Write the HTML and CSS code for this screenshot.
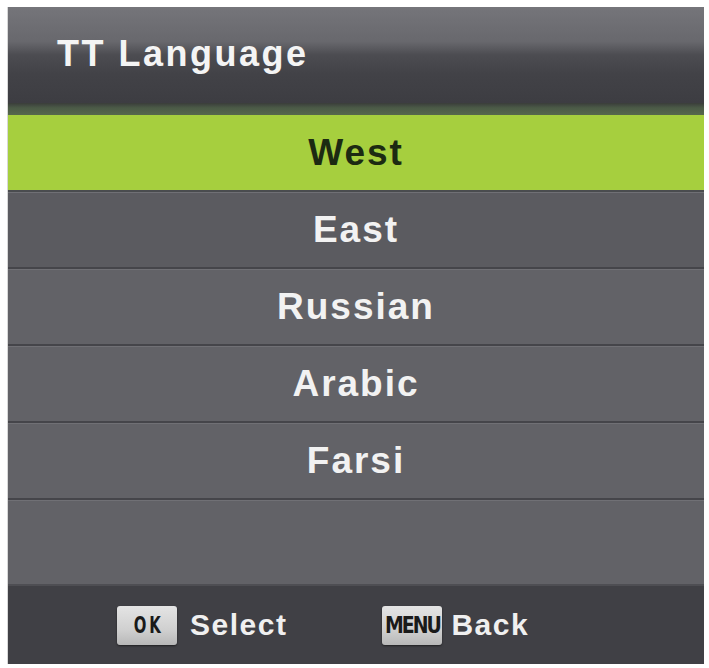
FILE: index.html
```html
<!DOCTYPE html>
<html>
<head>
<meta charset="utf-8">
<link rel="stylesheet" href="styles.css">
</head>
<body>
<div class="panel">
  <div class="header"><span class="title">TT Language</span></div>
  <div class="strip"></div>
  <div class="list">
    <div class="row selected">West</div>
    <div class="row">East</div>
    <div class="row">Russian</div>
    <div class="row">Arabic</div>
    <div class="row">Farsi</div>
    <div class="row empty"></div>
  </div>
  <div class="footer">
    <div class="hint ok-hint"><span class="key ok"><span class="key-text">OK</span></span><span class="label">Select</span></div>
    <div class="hint menu-hint"><span class="key menu"><span class="key-text">MENU</span></span><span class="label">Back</span></div>
  </div>
</div>
</body>
</html>
```
FILE: styles.css
```css
html, body { margin: 0; padding: 0; background: #ffffff; }
body { font-family: "Liberation Sans", Arial, sans-serif; }
.panel {
  margin: 7px 5px 0 8px;
  width: 696px;
  height: 657px;
  display: flex;
  flex-direction: column;
  background: #616166;
  box-shadow: -1px 0 0 #d8d8d8;
}
.header {
  height: 96px;
  display: flex;
  align-items: center;
  padding-left: 49px;
  background: linear-gradient(180deg, #75757a 0%, #68686d 36%, #4c4c51 50%, #424247 70%, #3d3d42 100%);
}
.title {
  color: #f4f4f4;
  font-weight: bold;
  font-size: 36px;
  letter-spacing: 2.5px;
  margin-top: -2px;
}
.strip {
  height: 12px;
  background: linear-gradient(180deg, #3a3d3a 0%, #4b5a47 40%, #56684c 100%);
}
.list { display: flex; flex-direction: column; flex: 1; }
.row {
  height: 75px;
  display: flex;
  align-items: center;
  justify-content: center;
  color: #f2f2f2;
  font-weight: bold;
  font-size: 37px;
  letter-spacing: 2px;
  background: #626267;
  border-top: 2px solid #45454a;
  box-shadow: inset 0 1px 0 #707075;
}
.row.selected {
  height: 75px;
  border-top: none;
  box-shadow: none;
  background: #a6cf3e;
  color: #1c2a12;
  border-bottom: 2px solid #4a4c4f;
}
.row.selected + .row { border-top: none; background: #5b5b60; }
.row.empty { flex: 1; height: auto; }
.footer {
  height: 78px;
  background: #404045;
  border-top: 2px solid #4e4e53;
  display: flex;
  align-items: center;
  padding-left: 109px;
  gap: 95px;
}
.hint { display: flex; align-items: center; }
.ok-hint { gap: 13px; }
.menu-hint { gap: 9px; }
.key {
  display: flex;
  align-items: center;
  justify-content: center;
  height: 39px;
  border-radius: 3px;
  background: linear-gradient(180deg, #e4e4e4 0%, #d0d0d0 60%, #b8b8b8 100%);
  color: #1a1a1a;
  font-family: "DejaVu Sans Condensed", "Liberation Sans Narrow", sans-serif;
  font-weight: bold;
  box-shadow: 0 1px 2px rgba(0,0,0,0.5);
}
.key.ok { width: 60px; font-size: 23px; }
.key.ok .key-text { display: inline-block; letter-spacing: 4px; margin-right: -4px; transform: scaleX(0.72); }
.key.menu { width: 60px; font-size: 21px; }
.key.menu .key-text { display: inline-block; letter-spacing: -2px; transform: scaleY(1.1); }
.label {
  color: #f0f0f0;
  font-weight: bold;
  font-size: 30px;
  letter-spacing: 1.5px;
}
```
